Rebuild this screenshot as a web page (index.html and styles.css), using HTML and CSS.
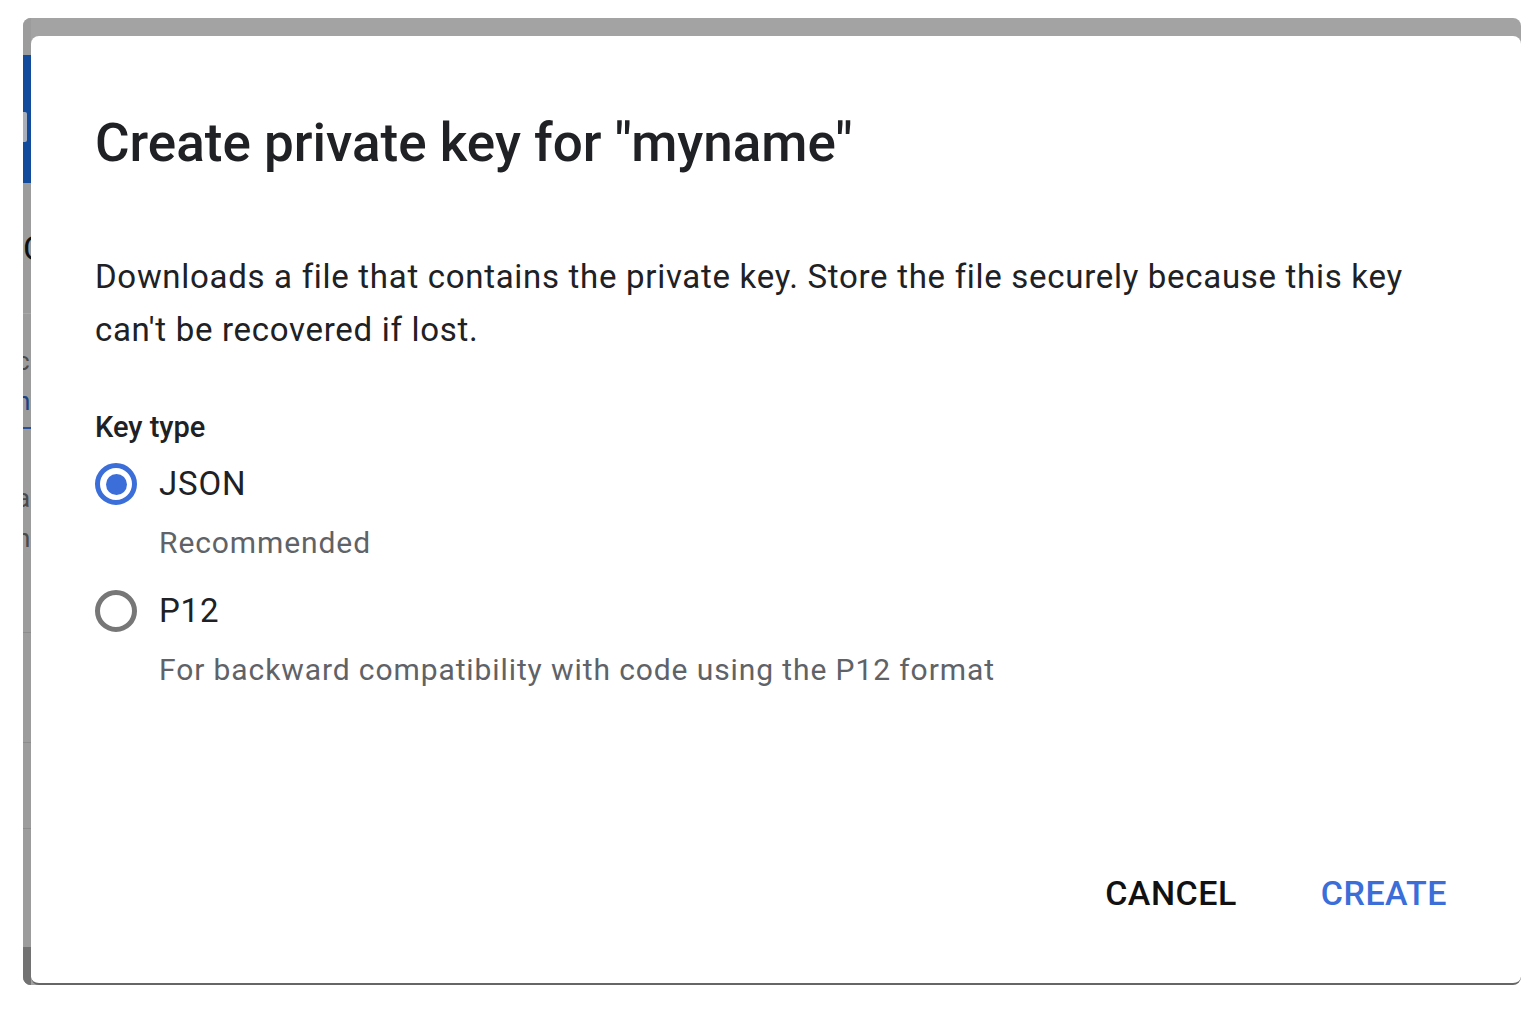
FILE: index.html
```html
<!DOCTYPE html>
<html lang="en">

<head>
    <meta charset="UTF-8">
    <meta name="viewport" content="width=device-width, initial-scale=1.0">
    <title>Create private key</title>
    <link rel="stylesheet" href="styles.css">
</head>

<body>
    <div class="screen">
        <!-- the dimmed page behind the dialog, only its left edge shows -->
        <div class="page-edge" aria-hidden="true">
            <div class="edge-header"><span class="edge-glyph"></span></div>
            <div class="edge-title">C</div>
            <div class="edge-rule light"></div>
            <div class="edge-text first">c</div>
            <div class="edge-text link">n</div>
            <div class="edge-rule link-line"></div>
            <div class="edge-text gap">a</div>
            <div class="edge-text">n</div>
            <div class="edge-rule r1"></div>
            <div class="edge-rule r2"></div>
            <div class="edge-rule r3"></div>
            <div class="edge-footer"></div>
        </div>

        <div class="dialog">
            <h1 class="dialog-title">Create private key for "myname"</h1>
            <p class="dialog-text">Downloads a file that contains the private key. Store the file securely because this key can't be recovered if lost.</p>

            <div class="key-type">Key type</div>

            <label class="radio-row">
                <span class="radio checked"></span>
                <span class="radio-label">JSON</span>
            </label>
            <div class="radio-hint">Recommended</div>

            <label class="radio-row second">
                <span class="radio"></span>
                <span class="radio-label">P12</span>
            </label>
            <div class="radio-hint">For backward compatibility with code using the P12 format</div>

            <div class="actions">
                <button class="btn">CANCEL</button>
                <button class="btn primary">CREATE</button>
            </div>
        </div>
    </div>
</body>

</html>
```

FILE: styles.css
```css
* {
    font-family: "Roboto", sans-serif;
    font-weight: 400;
    font-style: normal;
}

html,
body {
    background: #fff;
    margin: 0;
    padding: 0;
}

.screen {
    display: flex;
    box-sizing: border-box;
    width: 1498px;
    height: 967px;
    margin: 18px 0 0 23px;
    padding-top: 18px;
    background: #a3a3a3;
    border-radius: 8px;
    overflow: hidden;
}

/* left strip of the page under the overlay */
.page-edge {
    display: flex;
    flex-direction: column;
    width: 8px;
    margin-top: -18px;
    background: #9c9c9c;
    overflow: hidden;
}

.edge-header {
    height: 128px;
    margin-top: 37px;
    background: #124a9c;
}

.edge-glyph {
    display: block;
    width: 4px;
    height: 30px;
    margin-top: 57px;
    background: #a9aebb;
    border-radius: 0 2px 2px 0;
}

.edge-title {
    height: 30px;
    margin-top: 50px;
    font-size: 34px;
    line-height: 30px;
    color: #111;
}

.edge-rule {
    height: 1px;
    margin-top: 50px;
    background: #8c8c8c;
}

.edge-rule.light {
    background: #a9a9a9;
}

.edge-text {
    height: 24px;
    margin-left: -7px;
    font-size: 26px;
    line-height: 24px;
    color: #4a4a4a;
}

.edge-text.first {
    margin-top: 35px;
}

.edge-text.link {
    margin-top: 13px;
    color: #1d3f85;
}

.edge-rule.link-line {
    height: 2px;
    margin-top: 14px;
    background: #2a4f9a;
}

.edge-text.gap {
    margin-top: 57px;
}

.edge-text + .edge-text {
    margin-top: 16px;
}

.edge-rule.r1 {
    margin-top: 82px;
}

.edge-rule.r2 {
    margin-top: 109px;
}

.edge-rule.r3 {
    margin-top: 85px;
}

.edge-footer {
    height: 38px;
    margin-top: auto;
    background: #727272;
}

/* dialog */
.dialog {
    flex: 1;
    display: flex;
    flex-direction: column;
    box-sizing: border-box;
    padding: 75px 74px 66px 64px;
    background: #fff;
    border-radius: 8px;
    border-bottom: 2px solid #666;
    color: #202124;
}

.dialog-title {
    margin: 0;
    font-size: 53px;
    line-height: 64px;
    font-weight: 500;
}

.dialog-text {
    margin: 75px 0 0;
    font-size: 33px;
    line-height: 53px;
    letter-spacing: 0.7px;
}

.key-type {
    margin-top: 53px;
    font-size: 29px;
    line-height: 36px;
    font-weight: 500;
}

.radio-row {
    display: flex;
    align-items: center;
    gap: 22px;
    height: 48px;
    margin-top: 15px;
}

.radio-row.second {
    margin-top: 26px;
}

.radio {
    position: relative;
    box-sizing: border-box;
    width: 42px;
    height: 42px;
    border: 5px solid #777;
    border-radius: 50%;
}

.radio.checked {
    border-color: #3b6ed8;
}

.radio.checked::after {
    content: "";
    position: absolute;
    top: 5.5px;
    left: 5.5px;
    width: 21px;
    height: 21px;
    border-radius: 50%;
    background: #3b6ed8;
}

.radio-label {
    font-size: 33px;
    line-height: 48px;
    letter-spacing: 0.8px;
    color: #202124;
}

.radio-hint {
    margin: 17px 0 0 64px;
    font-size: 30px;
    line-height: 36px;
    letter-spacing: 0.9px;
    color: #5f6368;
}

.actions {
    display: flex;
    justify-content: flex-end;
    gap: 84px;
    margin-top: auto;
}

.btn {
    padding: 0;
    border: 0;
    background: none;
    font-size: 34px;
    line-height: 48px;
    font-weight: 500;
    letter-spacing: 0.5px;
    color: #111;
    cursor: pointer;
}

.btn.primary {
    color: #3b6ed8;
}
```
